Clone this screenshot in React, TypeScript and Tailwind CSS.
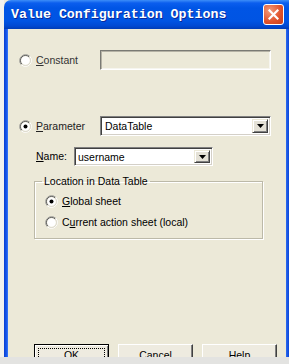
import React from "react";

function Radio({ checked }: { checked?: boolean }) {
  return (
    <svg width="13" height="13" viewBox="0 0 13 13" className="shrink-0">
      <path d="M2.26 10.74 A6 6 0 0 1 10.74 2.26" stroke="#9a9a96" strokeWidth="1" fill="none" />
      <path d="M10.74 2.26 A6 6 0 0 1 2.26 10.74" stroke="#ffffff" strokeWidth="1" fill="none" />
      <path d="M2.96 10.04 A5 5 0 0 1 10.04 2.96" stroke="#5a5a5a" strokeWidth="1" fill="none" />
      <path d="M10.04 2.96 A5 5 0 0 1 2.96 10.04" stroke="#dcd9cc" strokeWidth="1" fill="none" />
      <circle cx="6.5" cy="6.5" r="4.3" fill="#ffffff" />
      {checked && <circle cx="6.5" cy="6.5" r="2" fill="#000000" />}
    </svg>
  );
}

function DropBtn() {
  return (
    <div className="w-[16px] h-full bg-[#e4e1d6] border-t border-l border-t-[#ece9d8] border-l-[#ece9d8] border-r border-b border-r-[#404040] border-b-[#404040] shadow-[inset_1px_1px_0_#ffffff,inset_-1px_-1px_0_#808080] flex items-center justify-center shrink-0">
      <svg width="7" height="4" viewBox="0 0 7 4">
        <path d="M0 0 H7 L3.5 4 Z" fill="#000" />
      </svg>
    </div>
  );
}

function Btn({ label, def }: { label: string; def?: boolean }) {
  return (
    <div
      className={
        "w-[75px] h-[23px] shrink-0 flex items-center justify-center relative " +
        (def
          ? "border border-black bg-[#eeebe0] shadow-[inset_1px_1px_0_#ffffff,inset_-1px_-1px_0_#808080]"
          : "border-t border-l border-t-[#ffffff] border-l-[#ffffff] border-r border-b border-r-[#404040] border-b-[#404040] bg-[#eeebe0] shadow-[inset_-1px_-1px_0_#808080]")
      }
    >
      {def && <div className="absolute inset-[3px] border border-dotted border-black" />}
      <span className="relative">{label}</span>
    </div>
  );
}

export default function App() {
  return (
    <div className="w-[289px] h-[364px] overflow-hidden flex flex-col bg-[#ece9d8] font-['Liberation_Sans',Arial,sans-serif] text-[10.5px] text-black leading-[13px]">
      <div className="flex h-[357px] shrink-0">
        <div className="w-[4px] bg-[#f2f2ee] shrink-0" />
        <div className="flex-1 flex flex-col min-w-0">
          {/* Title bar */}
          <div className="h-[29px] shrink-0 rounded-tl-[7px] bg-[linear-gradient(to_bottom,#3d8ef8_0px,#0b5eee_3px,#0055e5_8px,#0054e3_21px,#0049d2_26px,#003cb5_29px)] flex items-center pl-[7px] pr-[5px]">
            <span className="font-['Liberation_Mono',monospace] font-bold text-[13.3px] text-white tracking-[0px] leading-none [text-shadow:1px_1px_0_#0a2a9a] whitespace-nowrap">
              Value Configuration Options
            </span>
            <div className="ml-auto w-[21px] h-[21px] rounded-[3px] border border-white bg-[radial-gradient(circle_at_30%_30%,#f39a79,#e0512a_60%,#c8401c)] flex items-center justify-center">
              <svg width="11" height="11" viewBox="0 0 11 11">
                <path d="M1.5 1.5 L9.5 9.5 M9.5 1.5 L1.5 9.5" stroke="#ffffff" strokeWidth="2.2" strokeLinecap="square" />
              </svg>
            </div>
          </div>
          <div className="flex flex-1 min-h-0">
            <div className="w-[4px] bg-[linear-gradient(to_right,#0a3fd0,#1a5cf0_70%,#3c7cf8)] shrink-0" />
            <div className="flex-1 min-w-0 overflow-hidden">
              {/* Constant row */}
              <div className="flex items-center mt-[21px] pl-[11px] h-[20px]">
                <div className="w-[81px] flex items-center gap-[4px]">
                  <Radio />
                  <span className="text-[#333]"><u>C</u>onstant</span>
                </div>
                <div className="w-[171px] h-[20px] border-t border-l border-t-[#7a7a74] border-l-[#7a7a74] border-r border-b border-r-[#ffffff] border-b-[#ffffff] shadow-[inset_1px_1px_0_#b5b2a5,inset_-1px_-1px_0_#f6f5ef] bg-[#ece9d8]" />
              </div>
              {/* Parameter row */}
              <div className="flex items-center mt-[46px] pl-[11px] h-[20px]">
                <div className="w-[81px] flex items-center gap-[4px]">
                  <Radio checked />
                  <span className="text-[#222]"><u>P</u>arameter</span>
                </div>
                <div className="w-[171px] h-[20px] border-t border-l border-t-[#808080] border-l-[#808080] border-r border-b border-r-[#ffffff] border-b-[#ffffff] shadow-[inset_1px_1px_0_#404040,inset_-1px_-1px_0_#d4d0c8] bg-white flex items-center p-[2px]">
                  <span className="flex-1 pl-[2px] pt-[1px]">DataTable</span>
                  <DropBtn />
                </div>
              </div>
              {/* Name row */}
              <div className="flex items-center mt-[11px] pl-[28px] h-[19px]">
                <div className="w-[38px]">
                  <span><u>N</u>ame:</span>
                </div>
                <div className="w-[139px] h-[19px] border-t border-l border-t-[#808080] border-l-[#808080] border-r border-b border-r-[#ffffff] border-b-[#ffffff] shadow-[inset_1px_1px_0_#404040,inset_-1px_-1px_0_#d4d0c8] bg-white flex items-center p-[2px]">
                  <span className="flex-1 pl-[1px] pt-[1px]">username</span>
                  <DropBtn />
                </div>
              </div>
              {/* Group box */}
              <fieldset className="ml-[26px] mt-[9px] w-[229px] h-[64px] border border-[#bcb9a8] shadow-[inset_1px_1px_0_#ffffff,1px_1px_0_#ffffff]">
                <legend className="ml-[7px] px-[2px] leading-[13px]">Location in Data Table</legend>
                <div className="flex items-center gap-[4px] pl-[10px] mt-[7px] h-[13px]">
                  <Radio checked />
                  <span><u>G</u>lobal sheet</span>
                </div>
                <div className="flex items-center gap-[4px] pl-[10px] mt-[8px] h-[13px]">
                  <Radio />
                  <span>C<u>u</u>rrent action sheet (local)</span>
                </div>
              </fieldset>
              {/* Buttons */}
              <div className="flex gap-[9px] pl-[26px] mt-[105px]">
                <Btn label="OK" def />
                <Btn label="Cancel" />
                <Btn label="Help" />
              </div>
            </div>
            <div className="w-[3px] bg-[linear-gradient(to_right,#2a6af0,#0b45d8)] shrink-0" />
          </div>
        </div>
      </div>
      <div className="h-[7px] bg-[#e3e3e1] shrink-0" />
    </div>
  );
}
